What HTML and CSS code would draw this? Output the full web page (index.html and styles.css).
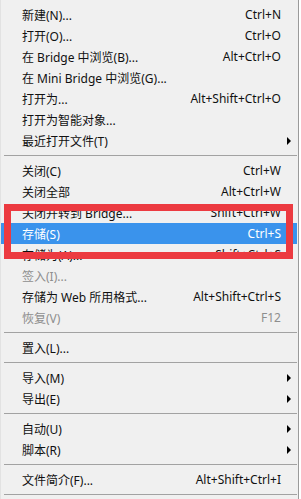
FILE: index.html
```html
<!DOCTYPE html>
<html lang="zh-CN">
<head>
    <meta charset="UTF-8">
    <title>文件菜单</title>
    <link rel="stylesheet" href="styles.css">
</head>
<body>
    <div class="menu">
        <ul class="menu-list">
            <li class="item"><span class="label">新建(N)...</span><span class="key">Ctrl+N</span></li>
            <li class="item"><span class="label">打开(O)...</span><span class="key">Ctrl+O</span></li>
            <li class="item"><span class="label">在 Bridge 中浏览(B)...</span><span class="key">Alt+Ctrl+O</span></li>
            <li class="item"><span class="label">在 Mini Bridge 中浏览(G)...</span><span class="key"></span></li>
            <li class="item"><span class="label">打开为...</span><span class="key">Alt+Shift+Ctrl+O</span></li>
            <li class="item"><span class="label">打开为智能对象...</span><span class="key"></span></li>
            <li class="item"><span class="label">最近打开文件(T)</span><span class="key"></span><span class="arrow"></span></li>
            <li class="sep"></li>
            <li class="item"><span class="label">关闭(C)</span><span class="key">Ctrl+W</span></li>
            <li class="item"><span class="label">关闭全部</span><span class="key">Alt+Ctrl+W</span></li>
            <li class="item"><span class="label">关闭并转到 Bridge...</span><span class="key">Shift+Ctrl+W</span></li>
            <li class="item active"><span class="label">存储(S)</span><span class="key">Ctrl+S</span></li>
            <li class="item"><span class="label">存储为(A)...</span><span class="key">Shift+Ctrl+S</span></li>
            <li class="item disabled"><span class="label">签入(I)...</span><span class="key"></span></li>
            <li class="item"><span class="label">存储为 Web 所用格式...</span><span class="key">Alt+Shift+Ctrl+S</span></li>
            <li class="item disabled"><span class="label">恢复(V)</span><span class="key">F12</span></li>
            <li class="sep"></li>
            <li class="item"><span class="label">置入(L)...</span><span class="key"></span></li>
            <li class="sep"></li>
            <li class="item"><span class="label">导入(M)</span><span class="key"></span><span class="arrow"></span></li>
            <li class="item"><span class="label">导出(E)</span><span class="key"></span><span class="arrow"></span></li>
            <li class="sep"></li>
            <li class="item"><span class="label">自动(U)</span><span class="key"></span><span class="arrow"></span></li>
            <li class="item"><span class="label">脚本(R)</span><span class="key"></span><span class="arrow"></span></li>
            <li class="sep"></li>
            <li class="item"><span class="label">文件简介(F)...</span><span class="key">Alt+Shift+Ctrl+I</span></li>
            <li class="sep"></li>
        </ul>
        <!-- red mark around the save item -->
        <div class="mark"></div>
    </div>
</body>
</html>
```

FILE: styles.css
```css
body {
    margin: 0;
    padding: 0;
    background: #ffffff;
    font-family: "Noto Sans", "Noto Sans CJK SC", sans-serif;
    font-size: 12px;
    color: #111;
}

.menu {
    position: relative;
    width: 299px;
    height: 499px;
    background: #f0f0f0;
    border-left: 1px solid #e2e2e2;
    border-right: 1px solid #9a9a9a;
    box-sizing: border-box;
    overflow: hidden;
}

.menu-list {
    list-style: none;
    margin: 0;
    padding: 4px 0 0 0;
}

.item {
    display: grid;
    grid-template-columns: 1fr auto 16px;
    align-items: center;
    height: 21px;
    padding-left: 21px;
    margin-right: 1px;
    white-space: nowrap;
}

.item .key {
    text-align: right;
}

.item.active {
    background: #3a93ec;
    color: #fff;
}

.item.disabled {
    color: #8e8e8e;
}

.arrow {
    width: 0;
    height: 0;
    margin-left: 6px;
    border-left: 4px solid #000;
    border-top: 4px solid transparent;
    border-bottom: 4px solid transparent;
}

.sep {
    height: 5px;
    padding-top: 4px;
}

.sep::after {
    content: "";
    display: block;
    margin: 0 1px 0 3px;
    border-top: 1px solid #a2a2a2;
}

.mark {
    position: absolute;
    left: 3px;
    top: 204px;
    width: 289px;
    height: 55px;
    border: 7px solid #ec3a40;
    box-sizing: border-box;
}
```
